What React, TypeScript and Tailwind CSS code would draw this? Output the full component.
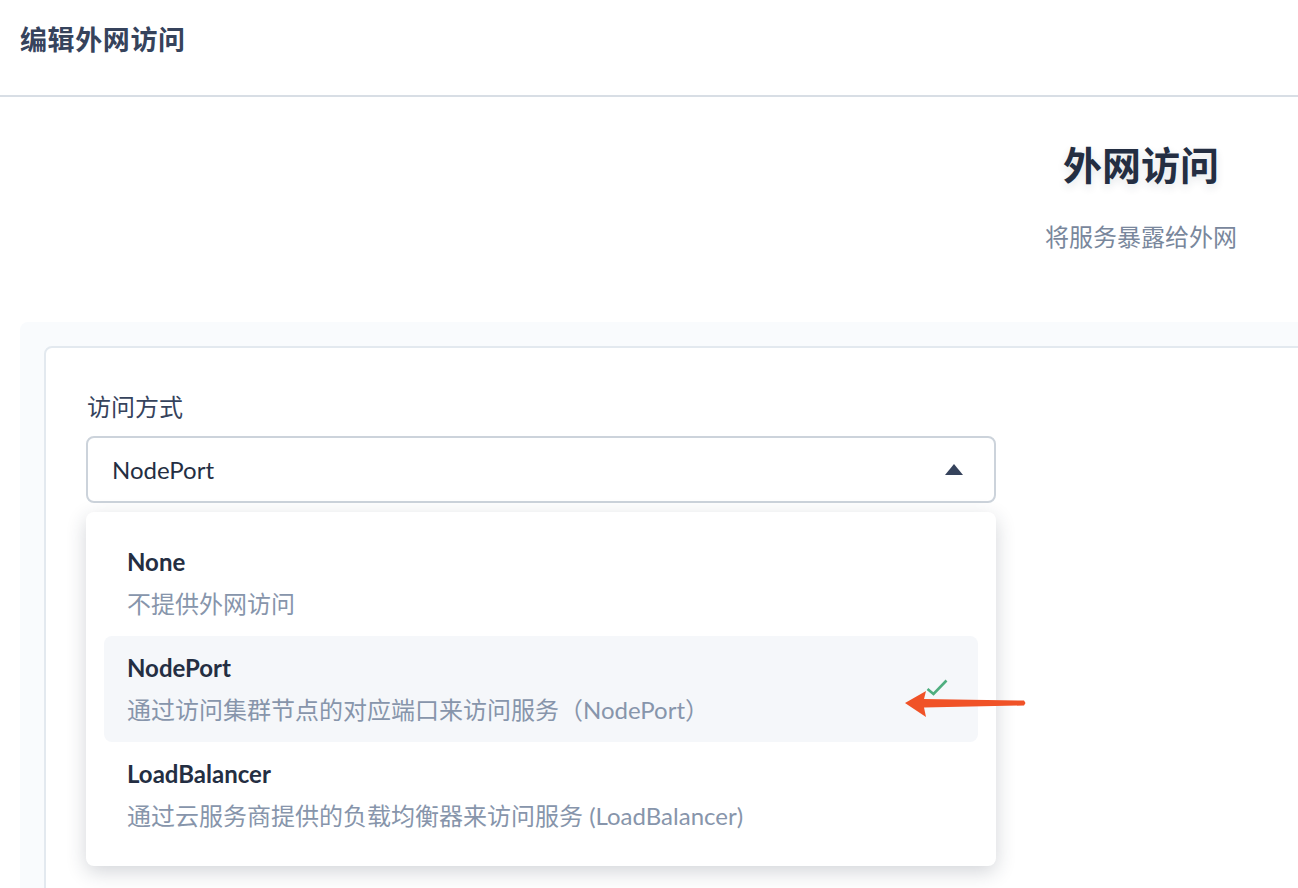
import React from "react";

const font = { fontFamily: '"Lato", "Noto Sans CJK SC", sans-serif' };

type Opt = { value: string; desc: string };
const options: Opt[] = [
  { value: "None", desc: "不提供外网访问" },
  { value: "NodePort", desc: "通过访问集群节点的对应端口来访问服务（NodePort）" },
  { value: "LoadBalancer", desc: "通过云服务商提供的负载均衡器来访问服务 (LoadBalancer)" },
];

export default function App() {
  return (
    <div className="relative w-[1298px] h-[888px] overflow-hidden bg-white" style={font}>
      <div className="w-[2282px]">
        <header className="h-[97px] border-b-2 border-[#d8dee5] flex items-center pl-5 pb-[16px]">
          <h1 className="text-[27px] leading-none font-semibold text-[#36435c] tracking-[0.6px]">编辑外网访问</h1>
        </header>

        <div className="text-center pt-[46px]">
          <div className="text-[39px] leading-[44px] font-bold text-[#242e42] [text-shadow:0_4px_8px_rgba(36,46,66,0.12)]">
            外网访问
          </div>
          <div className="mt-[35px] text-[24px] leading-[30px] text-[#79879c]">将服务暴露给外网</div>
        </div>

        <div className="ml-5 mt-[70px] bg-[#f9fbfd] rounded-tl-[8px] pl-6 pt-6 h-[600px]">
          <div className="bg-white border-2 border-[#e3e9ef] rounded-tl-[8px] h-[560px] pl-[40px] pt-[44px]">
            <div className="text-[24px] leading-[30px] text-[#36435c] pl-[1px]">访问方式</div>
            <div className="relative w-[910px] mt-[14px]">
              <div className="h-[67px] border-2 border-[#ccd3db] rounded-[8px] flex items-center pl-6 pr-8 justify-between">
                <span className="text-[24px] text-[#242e42]">NodePort</span>
                <svg width="18" height="11" viewBox="0 0 18 11" className="mr-[-1px]">
                  <polygon points="9,0 18,11 0,11" fill="#36435c" />
                </svg>
              </div>
              <div className="absolute left-0 top-[76px] w-[910px] bg-white rounded-[8px] shadow-[0_6px_20px_rgba(36,46,66,0.2)] py-[18px] px-[18px] z-10">
                {options.map((o) => {
                  const sel = o.value === "NodePort";
                  return (
                    <div
                      key={o.value}
                      className={`relative h-[106px] rounded-[8px] pl-[23px] pt-[17px] ${sel ? "bg-[#f5f7fa]" : ""}`}
                    >
                      <div className="text-[24px] leading-[30px] font-bold text-[#242e42]">{o.value}</div>
                      <div className="mt-[12px] text-[24px] leading-[30px] text-[#8795ab] whitespace-nowrap">{o.desc}</div>
                      {sel && (
                        <svg
                          className="absolute left-[822px] top-[43px]"
                          width="22"
                          height="18"
                          viewBox="0 0 22 18"
                        >
                          <polyline
                            points="1.5,10 7.5,15 20.5,1.5"
                            fill="none"
                            stroke="#4fae7f"
                            strokeWidth="2.6"
                          />
                        </svg>
                      )}
                    </div>
                  );
                })}
              </div>
            </div>
          </div>
        </div>
      </div>

      <svg className="absolute left-[900px] top-[686px] z-20" width="130" height="34" viewBox="0 0 130 34">
        <polygon
          points="5,17 26,5 24,13 124,14.5 125.5,17 124,19.5 24,21.5 26,31"
          fill="#f05227"
          strokeLinejoin="round"
        />
      </svg>
    </div>
  );
}
